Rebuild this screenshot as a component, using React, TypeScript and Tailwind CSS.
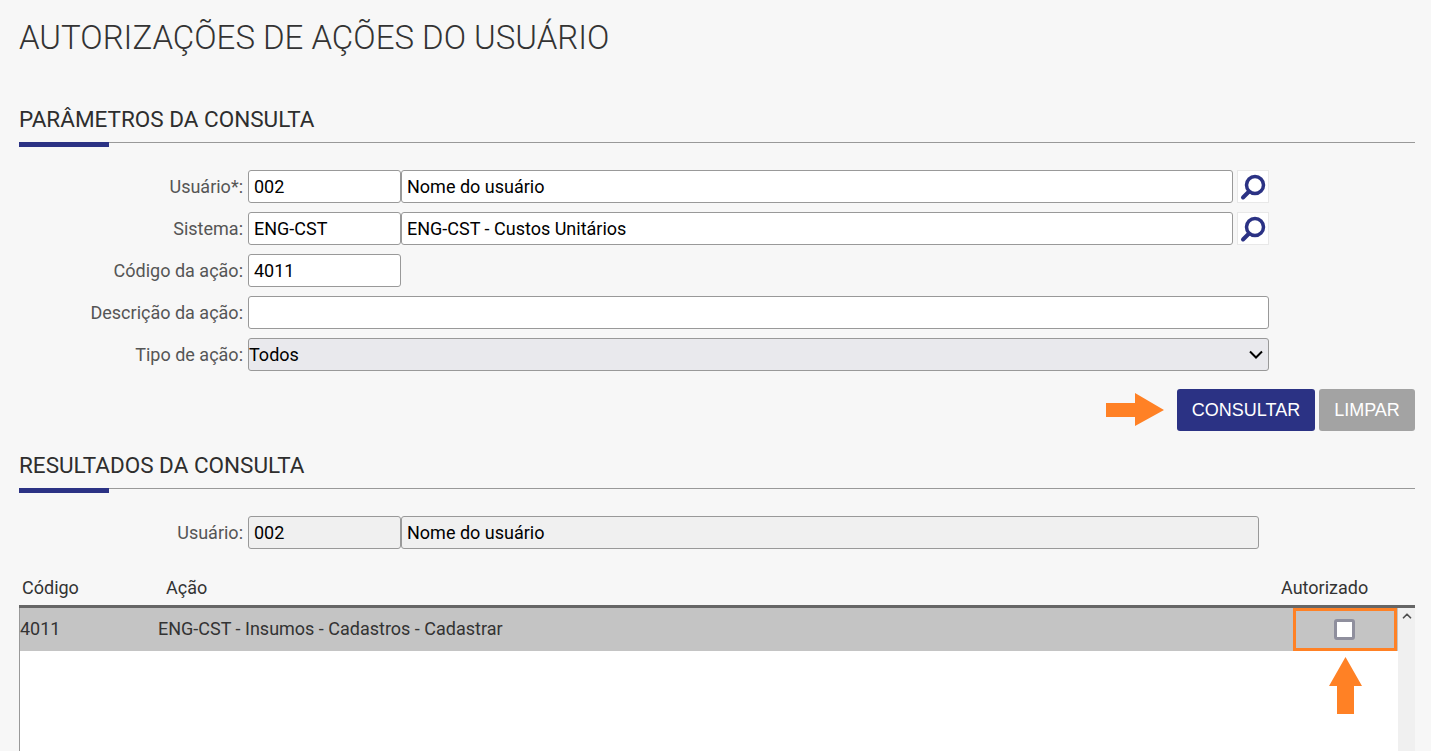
import React from "react";
import { ChevronUp } from "lucide-react";

const font = { fontFamily: "Roboto, sans-serif" };

function SearchIcon() {
  return (
    <div className="w-8 h-[33px] ml-1 bg-white border border-[#e8e8e8] flex items-center justify-center">
      <svg width="30" height="30" viewBox="0 0 30 30" fill="none">
        <circle cx="17" cy="13" r="8.5" stroke="#2b3284" strokeWidth="3.5" />
        <path d="M10.5 20L5 25.5" stroke="#2b3284" strokeWidth="4" strokeLinecap="round" />
      </svg>
    </div>
  );
}

function Field({ value, className }: { value?: string; className: string }) {
  return (
    <div className={"h-[33px] border border-[#999] rounded-[3px] px-[5px] flex items-center text-[18px] text-black " + className}>
      {value}
    </div>
  );
}

function Row({ label, children }: { label: string; children: React.ReactNode }) {
  return (
    <div className="flex items-center h-[33px]">
      <div className="w-[229px] pr-[5px] text-right text-[18px] text-[#555]">{label}:</div>
      {children}
    </div>
  );
}

function SectionTitle({ title }: { title: string }) {
  return (
    <div>
      <h2 className="text-[22.5px] leading-[26px] text-[#2e2e2e]">{title}</h2>
      <div className="mt-[10px] h-px bg-[#999]" />
      <div className="w-[90px] h-[5px] -mt-px bg-[#2b3284]" />
    </div>
  );
}

export default function App() {
  return (
    <div className="h-screen overflow-hidden bg-[#f7f7f7] pl-[19px] pr-4 relative" style={font}>
      <h1 className="pt-5 text-[33px] leading-9 font-light text-[#333]">AUTORIZAÇÕES DE AÇÕES DO USUÁRIO</h1>

      {/* parametros */}
      <div className="mt-[50px]">
        <SectionTitle title="PARÂMETROS DA CONSULTA" />
      </div>
      <div className="mt-[23px] flex flex-col gap-[9px]">
        <Row label="Usuário*">
          <Field value="002" className="w-[153px] bg-white" />
          <Field value="Nome do usuário" className="w-[832px] bg-white" />
          <SearchIcon />
        </Row>
        <Row label="Sistema">
          <Field value="ENG-CST" className="w-[153px] bg-white" />
          <Field value="ENG-CST - Custos Unitários" className="w-[832px] bg-white" />
          <SearchIcon />
        </Row>
        <Row label="Código da ação">
          <Field value="4011" className="w-[153px] bg-white" />
        </Row>
        <Row label="Descrição da ação">
          <Field className="w-[1021px] bg-white" />
        </Row>
        <Row label="Tipo de ação">
          <div className="w-[1021px] h-[33px] border border-[#999] rounded-[3px] bg-[#e9e9ed] pr-[5px] flex items-center justify-between text-[18px] text-black">
            <span>Todos</span>
            <svg width="14" height="10" viewBox="0 0 14 10" fill="none">
              <path d="M1 1.5L7 7.5L13 1.5" stroke="#000" strokeWidth="2" />
            </svg>
          </div>
        </Row>
      </div>

      <div className="mt-[18px] flex justify-end items-center" style={{ fontFamily: "'Liberation Sans', sans-serif" }}>
        <svg width="58" height="34" viewBox="0 0 58 34" className="mr-[13px]">
          <path d="M0 10H29V0L58 17L29 33V24H0Z" fill="#ff8125" />
        </svg>
        <button className="w-[138px] h-[42px] bg-[#2b3284] rounded-[3px] text-white text-[18px]">CONSULTAR</button>
        <button className="w-24 h-[42px] ml-1 bg-[#a3a3a3] rounded-[3px] text-white text-[18px]">LIMPAR</button>
      </div>

      {/* resultados */}
      <div className="mt-[21px]">
        <SectionTitle title="RESULTADOS DA CONSULTA" />
      </div>
      <div className="mt-[23px]">
        <Row label="Usuário">
          <Field value="002" className="w-[153px] bg-[#f0f0f0]" />
          <Field value="Nome do usuário" className="w-[858px] bg-[#f0f0f0]" />
        </Row>
      </div>

      <div className="mt-[25px] mb-[5px] flex h-[26px] text-[18px] text-[#333] items-center">
        <div className="w-[147px] pl-[3px]">Código</div>
        <div className="flex-1">Ação</div>
        <div className="w-[134px]">Autorizado</div>
      </div>

      <div className="border-t-[3px] border-[#666] flex h-[200px]">
        <div className="flex-1 bg-white border-l border-[#999]">
          <div className="flex items-center h-[43px] bg-[#c4c4c4] text-[18px] text-[#333]">
            <div className="w-[138px] pb-[3px]">4011</div>
            <div className="flex-1 pb-[3px]">ENG-CST - Insumos - Cadastros - Cadastrar</div>
            <div className="w-[104px] h-[43px] mr-px border-[3px] border-[#ff8125] flex items-center justify-center">
              <div className="w-[21px] h-[21px] mr-px bg-white border-[3px] border-[#8f8f9d] rounded-[3px]" />
            </div>
          </div>
        </div>
        <div className="w-[17px] bg-[#f0f0f0] flex justify-center pt-px">
          <ChevronUp size={14} strokeWidth={3} className="text-[#505050]" />
        </div>
      </div>

      {/* seta do checkbox */}
      <svg width="33" height="57" viewBox="0 0 33 57" className="absolute left-[1329px] top-[657px]">
        <path d="M16.5 0L33 29H25V57H8V29H0Z" fill="#ff8125" />
      </svg>
    </div>
  );
}
